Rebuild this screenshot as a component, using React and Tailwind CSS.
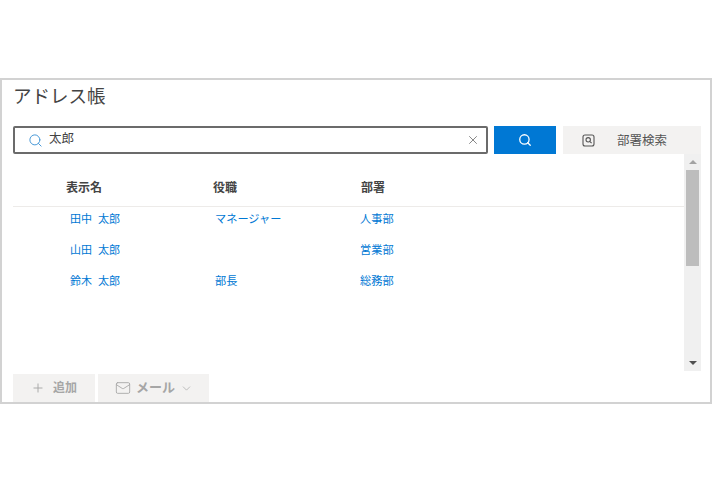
import React from "react";
import { Search, X, Plus, Mail, ChevronDown } from "lucide-react";

const rows = [
  ["田中 太郎", "マネージャー", "人事部"],
  ["山田 太郎", "", "営業部"],
  ["鈴木 太郎", "部長", "総務部"],
];

export default function App() {
  return (
    <div className="w-[712px] h-[480px] bg-white pt-[78px] overflow-hidden font-['Liberation_Sans','Noto_Sans_CJK_JP',sans-serif]">
      <div className="h-[326px] border-2 border-[#d2d2d2] pl-[11px] pr-[9px] flex flex-col">
        <h1 className="h-[46px] pt-[3px] text-[18.5px] leading-[28px] font-normal text-[#444444]">アドレス帳</h1>
        <div className="flex h-[28px] shrink-0">
          <div className="w-[475px] border-2 border-[#6b6b6b] rounded-[2px] flex items-center pl-[13px] pr-[6px]">
            <Search size={15} strokeWidth={1.6} className="text-[#4a9ad8] mt-[1px]" />
            <span className="ml-[6px] text-[12.5px] leading-none text-[#444444] -mt-[1px]">太郎</span>
            <X size={14} strokeWidth={1.5} className="ml-auto text-[#777777]" />
          </div>
          <button className="ml-[6px] w-[62px] bg-[#0078d4] flex items-center justify-center">
            <Search size={14} strokeWidth={2.2} className="text-white" />
          </button>
          <button className="ml-[7px] w-[138px] bg-[#f3f2f1] flex items-center pl-[19px]">
            <svg width="13" height="13" viewBox="0 0 13 13" fill="none" stroke="#555555" strokeWidth="1.1">
              <rect x="1" y="1" width="11" height="11" rx="2" />
              <circle cx="6.2" cy="5.8" r="2.2" />
              <path d="M8 7.6l1.6 1.6" />
            </svg>
            <span className="ml-[22px] pt-[3px] text-[12.5px] text-[#555555]">部署検索</span>
          </button>
        </div>
        <div className="flex h-[217px] shrink-0">
          <div className="w-[671px]">
            <div className="h-[53px] border-b border-[#edebe9] grid grid-cols-[200px_148px_1fr] pt-[25px] text-[12px] leading-[18px] font-bold text-[#444444]">
              <span className="pl-[53px]">表示名</span>
              <span>役職</span>
              <span>部署</span>
            </div>
            {rows.map(([name, role, dept]) => (
              <div key={name} className="h-[31px] grid grid-cols-[200px_147px_1fr] text-[11.2px] leading-[24px] text-[#0078d4]">
                <span className="pl-[57px] whitespace-pre text-[11px]">{name.replace(" ", "  ")}</span>
                <span className="pl-[2px]">{role}</span>
                <span>{dept}</span>
              </div>
            ))}
          </div>
          <div className="w-[17px] bg-[#f0f0f0] flex flex-col items-center">
            <div className="h-[16px] flex items-center justify-center">
              <div className="w-0 h-0 border-x-[4px] border-x-transparent border-b-[4px] border-b-[#a3a3a3]" />
            </div>
            <div className="w-[13px] h-[96px] bg-[#bdbdbd]" />
            <div className="mt-auto h-[16px] flex items-center justify-center">
              <div className="w-0 h-0 border-x-[4px] border-x-transparent border-t-[4px] border-t-[#505050]" />
            </div>
          </div>
        </div>
        <div className="flex gap-[3px] h-[28px] mt-[3px] shrink-0">
          <button className="w-[82px] bg-[#f3f2f1] flex items-center pl-[18px] text-[#a6a6a6]">
            <Plus size={14} strokeWidth={1.6} />
            <span className="ml-[8px] text-[12px] font-bold">追加</span>
          </button>
          <button className="w-[111px] bg-[#f3f2f1] flex items-center pl-[17px] text-[#a6a6a6]">
            <Mail size={16} strokeWidth={1.3} />
            <span className="ml-[5px] text-[13px] font-bold">メール</span>
            <ChevronDown size={13} strokeWidth={1.3} className="ml-[5px]" />
          </button>
        </div>
      </div>
    </div>
  );
}
